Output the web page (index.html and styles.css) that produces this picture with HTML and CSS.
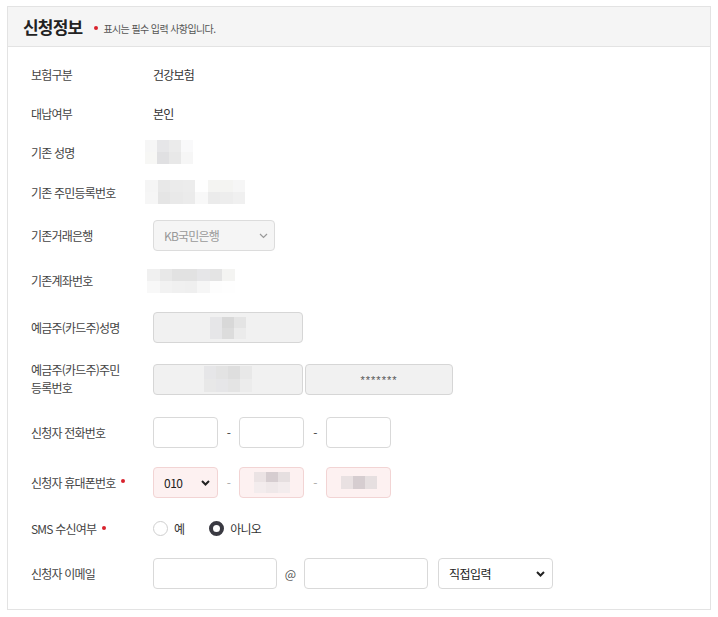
FILE: index.html
```html
<!DOCTYPE html>
<html lang="ko">
<head>
<meta charset="utf-8">
<title>신청정보</title>
<link rel="stylesheet" href="styles.css">
</head>
<body>
<div class="page">
  <section class="panel">
    <header class="panel-head">
      <h2 class="panel-title">신청정보</h2>
      <p class="note"><span class="dot"></span>표시는 필수 입력 사항입니다.</p>
    </header>
    <div class="panel-body">
      <div class="row h39">
        <div class="label">보험구분</div>
        <div class="value">건강보험</div>
      </div>
      <div class="row h39">
        <div class="label">대납여부</div>
        <div class="value">본인</div>
      </div>
      <div class="row h38">
        <div class="label">기존 성명</div>
        <div class="value">
          <div class="mosaic shift cols4">
            <i class="c-f6"></i><i class="c-e6"></i><i class="c-eb"></i><i class="c-f9"></i>
            <i class="c-f7"></i><i class="c-e0"></i><i class="c-e8"></i><i class="c-f6"></i>
          </div>
        </div>
      </div>
      <div class="row h42">
        <div class="label">기존 주민등록번호</div>
        <div class="value">
          <div class="mosaic shift cols8">
            <i class="c-f5"></i><i class="c-e8"></i><i class="c-eb"></i><i class="c-ec"></i><i class="c-fe"></i><i class="c-f4"></i><i class="c-f4"></i><i class="c-f6"></i>
            <i class="c-f6"></i><i class="c-e5"></i><i class="c-e9"></i><i class="c-eb"></i><i class="c-f8"></i><i class="c-eb"></i><i class="c-ed"></i><i class="c-f0"></i>
          </div>
        </div>
      </div>
      <div class="row h45">
        <div class="label">기존거래은행</div>
        <div class="value">
          <div class="select select-disabled w122">
            <span>KB국민은행</span>
            <svg class="chev-light" width="9" height="6" viewBox="0 0 9 6"><path d="M1 1l3.5 3.5L8 1" fill="none" stroke="#999" stroke-width="1.2"/></svg>
          </div>
        </div>
      </div>
      <div class="row h45">
        <div class="label">기존계좌번호</div>
        <div class="value">
          <div class="mosaic shift-sm cols7">
            <i class="c-f0"></i><i class="c-e8"></i><i class="c-e2"></i><i class="c-e2"></i><i class="c-e6"></i><i class="c-e4"></i><i class="c-f4"></i>
            <i class="c-f8"></i><i class="c-f2"></i><i class="c-f0"></i><i class="c-ef"></i><i class="c-f6"></i><i class="c-fd"></i><i class="c-fe"></i>
          </div>
        </div>
      </div>
      <div class="row h49">
        <div class="label">예금주(카드주)성명</div>
        <div class="value">
          <div class="field readonly w150">
            <div class="mosaic cols3 small">
              <i class="c-e6"></i><i class="c-d8"></i><i class="c-e4"></i>
              <i class="c-e6"></i><i class="c-dc"></i><i class="c-eb"></i>
            </div>
          </div>
        </div>
      </div>
      <div class="row h54">
        <div class="label two-line">예금주(카드주)주민<br>등록번호</div>
        <div class="value gap2">
          <div class="field readonly w150">
            <div class="mosaic cols4 mid">
              <i class="c-e6"></i><i class="c-e3"></i><i class="c-de"></i><i class="c-e8"></i>
              <i class="c-e8"></i><i class="c-e6"></i><i class="c-e4"></i><i class="c-ec"></i>
            </div>
          </div>
          <div class="field readonly w148"><span class="mask">*******</span></div>
        </div>
      </div>
      <div class="row h52">
        <div class="label">신청자 전화번호</div>
        <div class="value">
          <input class="field w65" type="text">
          <span class="dash">-</span>
          <input class="field w65" type="text">
          <span class="dash wide">-</span>
          <input class="field w65" type="text">
        </div>
      </div>
      <div class="row h48">
        <div class="label">신청자 휴대폰번호<span class="req"></span></div>
        <div class="value">
          <div class="select pink w65">
            <span class="dark">010</span>
            <svg class="chev-dark" width="9" height="6" viewBox="0 0 9 6"><path d="M1 1l3.5 3.5L8 1" fill="none" stroke="#222" stroke-width="2"/></svg>
          </div>
          <span class="dash light">-</span>
          <div class="field pink w65">
            <div class="mosaic cols3 phone">
              <i class="p-1"></i><i class="p-2"></i><i class="p-3"></i>
              <i class="p-4"></i><i class="p-5"></i><i class="p-4"></i>
            </div>
          </div>
          <span class="dash light wide">-</span>
          <div class="field pink w65">
            <div class="mosaic cols3 phone one">
              <i class="p-6"></i><i class="p-2"></i><i class="p-3"></i>
            </div>
          </div>
        </div>
      </div>
      <div class="row h45">
        <div class="label">SMS 수신여부<span class="req"></span></div>
        <div class="value radios">
          <label class="radio"><span class="circle"></span>예</label>
          <label class="radio checked"><span class="circle"></span>아니오</label>
        </div>
      </div>
      <div class="row h45">
        <div class="label">신청자 이메일</div>
        <div class="value">
          <input class="field w124" type="text">
          <span class="at">@</span>
          <input class="field w124" type="text">
          <div class="select w115 ml10">
            <span class="dark">직접입력</span>
            <svg class="chev-dark" width="9" height="6" viewBox="0 0 9 6"><path d="M1 1l3.5 3.5L8 1" fill="none" stroke="#222" stroke-width="2"/></svg>
          </div>
        </div>
      </div>
    </div>
  </section>
</div>
</body>
</html>
```

FILE: styles.css
```css
* { box-sizing: border-box; }
html, body { margin: 0; padding: 0; background: #fff; }
body {
  font-family: "Noto Sans CJK KR", "Noto Sans", sans-serif;
  color: #333;
  font-size: 12px;
}
.page { padding: 6px 7px 0 7px; }
.panel {
  width: 704px;
  border: 1px solid #e3e3e3;
}
.panel-head {
  height: 40px;
  background: #f5f5f5;
  border-bottom: 1px solid #e3e3e3;
  display: flex;
  align-items: center;
  padding-left: 15px;
}
.panel-title {
  margin: 0;
  font-size: 17px;
  font-weight: 700;
  color: #222;
  letter-spacing: -0.8px;
}
.note {
  margin: 0 0 0 12px;
  font-size: 10px;
  color: #555;
  letter-spacing: -0.6px;
  display: flex;
  align-items: center;
  padding-top: 3px;
}
.dot, .req {
  display: inline-block;
  width: 4px;
  height: 4px;
  border-radius: 50%;
  background: #d9232d;
}
.dot { margin-right: 5px; }
.req { margin-left: 6px; position: relative; top: -1px; }
.panel-body { padding: 8px 0 13px 23px; }
.row {
  display: grid;
  grid-template-columns: 122px 1fr;
  align-items: center;
}
.h38 { height: 38px; }
.h39 { height: 39px; }
.h42 { height: 42px; }
.h45 { height: 45px; }
.h48 { height: 48px; }
.h49 { height: 49px; }
.h52 { height: 52px; }
.h54 { height: 54px; }
.label {
  color: #444;
  font-size: 12px;
  letter-spacing: -0.8px;
  display: flex;
  align-items: center;
}
.label.two-line { display: block; line-height: 18px; }
.value {
  display: flex;
  align-items: center;
  color: #333;
  font-size: 12px;
  letter-spacing: -0.8px;
}
.gap2 { gap: 2px; }
.mosaic { display: grid; grid-auto-rows: 12px; }
.mosaic i { display: block; }
.cols3 { grid-template-columns: repeat(3, 12px); }
.cols4 { grid-template-columns: repeat(4, 12px); }
.cols7 { grid-template-columns: repeat(7, 12.5px); }
.cols8 { grid-template-columns: repeat(8, 12.5px); }
.shift { margin-left: -8px; }
.shift-sm { margin-left: -6px; }
.mosaic.small { grid-auto-rows: 11px; }
.mosaic.mid { grid-auto-rows: 13px; }
.mosaic.phone { grid-auto-rows: 10.5px; }
.mosaic.one { grid-auto-rows: 13px; }
.c-d8 { background: #d8d8d8; } .c-dc { background: #dcdcdc; } .c-de { background: #dedede; }
.c-e0 { background: #e0e0e2; } .c-e2 { background: #e2e2e2; } .c-e3 { background: #e3e3e3; }
.c-e4 { background: #e4e4e4; } .c-e5 { background: #e5e5e5; } .c-e6 { background: #e6e6e8; }
.c-e8 { background: #e8e8e8; } .c-e9 { background: #e9e9e9; } .c-eb { background: #ebebeb; }
.c-ec { background: #ececec; } .c-ed { background: #ededed; } .c-ef { background: #efefef; }
.c-f0 { background: #f0f0f0; } .c-f2 { background: #f2f2f2; } .c-f4 { background: #f4f4f2; }
.c-f5 { background: #f5f5f5; } .c-f6 { background: #f6f6f6; } .c-f7 { background: #f7f7f5; }
.c-f8 { background: #f8f8f8; } .c-f9 { background: #f9f9fa; } .c-fd { background: #fdfdfd; }
.c-fe { background: #fefefe; }
.p-1 { background: #ebe3e4; } .p-2 { background: #d6cdd0; } .p-3 { background: #e6dfe0; }
.p-4 { background: #f3eced; } .p-5 { background: #efe8e9; } .p-6 { background: #e9e1e2; }

.field {
  height: 31px;
  border: 1px solid #d9d9d9;
  border-radius: 4px;
  background: #fff;
  margin: 0;
  padding: 0 8px;
  font: inherit;
  display: flex;
  align-items: center;
  justify-content: center;
}
.readonly { background: #f1f1f1; border-color: #d6d6d6; }
.pink { background: #fdf1f1; border-color: #f2d4d4; }
.w65 { width: 65px; }
.w122 { width: 122px; }
.w124 { width: 124px; }
.w115 { width: 115px; }
.w148 { width: 148px; }
.w150 { width: 150px; }
.ml10 { margin-left: 10px; }
.mask {
  color: #555;
  font-family: "Liberation Sans", sans-serif;
  font-size: 11px;
  letter-spacing: 1px;
  position: relative;
  top: 1px;
}
.dash {
  width: 21px;
  text-align: center;
  color: #444;
  font-size: 12px;
}
.dash.wide { width: 22px; }
.dash.light { color: #aaa; }
.at {
  width: 27px;
  text-align: center;
  color: #555;
  font-size: 12px;
  letter-spacing: 0;
}
.select {
  position: relative;
  height: 31px;
  border: 1px solid #d9d9d9;
  border-radius: 4px;
  background: #fff;
  display: flex;
  align-items: center;
  padding-left: 10px;
}
.select-disabled { background: #f5f5f5; color: #999; border-color: #dcdcdc; }
.select .dark { color: #222; letter-spacing: -0.5px; }
.select.pink { background: #fdf1f1; border-color: #f2d4d4; }
.chev-light, .chev-dark {
  position: absolute;
  top: 12px;
}
.chev-light { right: 6px; }
.chev-dark { right: 7px; }
.radios { gap: 0; }
.radio {
  display: flex;
  align-items: center;
  color: #333;
  font-size: 12px;
  margin-right: 25px;
}
.circle {
  width: 15px;
  height: 15px;
  border-radius: 50%;
  border: 1px solid #cfcfcf;
  background: #fff;
  margin-right: 6px;
}
.radio.checked .circle {
  border: 4.5px solid #3a3a42;
  background: #fff;
}
```
